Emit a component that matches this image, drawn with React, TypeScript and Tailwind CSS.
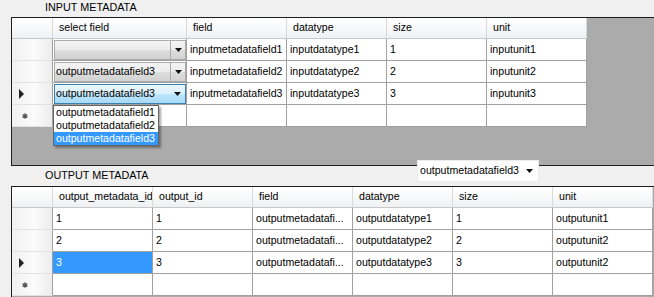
import React from "react";

type ComboVariant = "normal" | "hot";

const cellBase =
  "border-r border-b border-[#a0a0a0] bg-white flex items-center pl-[3px] whitespace-nowrap overflow-hidden";
const headBase =
  "border-r border-r-[#d9d9d9] border-b border-b-[#c8c8c8] bg-[linear-gradient(to_bottom,#ffffff,#f7f8f9_55%,#eef0f3)] flex items-center pl-[6px] whitespace-nowrap overflow-hidden";
const rowHeadBase =
  "border-r border-r-[#a0a0a0] border-b border-b-[#e2e2e2] bg-[linear-gradient(to_right,#f1f1f1,#fbfbfb_55%,#ededed)] flex items-center";

const Arrow = () => (
  <svg width="7" height="4" viewBox="0 0 7 4">
    <polygon points="0,0 7,0 3.5,4" fill="#111" />
  </svg>
);

const CurrentRow = () => (
  <div className="pl-[7px] flex items-center">
    <svg width="6" height="10" viewBox="0 0 6 10">
      <polygon points="0,0 5,5 0,10" fill="#222" />
    </svg>
  </div>
);

const NewRow = () => (
  <div className="pl-[10px] flex items-center">
    <svg width="6" height="6" viewBox="0 0 6 6">
      <path d="M3 0.3V5.7M0.6 1.6L5.4 4.4M0.6 4.4L5.4 1.6" stroke="#555" strokeWidth="1.3" />
    </svg>
  </div>
);

function ComboCell({ text, variant }: { text?: string; variant: ComboVariant }) {
  const box =
    variant === "hot"
      ? "border-[#3c7fb1] bg-[linear-gradient(to_bottom,#eaf6fd_0%,#d9f0fc_50%,#bee6fd_50%,#a7d9f5_100%)]"
      : "border-[#acacac] bg-[linear-gradient(to_bottom,#f4f4f4_0%,#ececec_50%,#dedede_50%,#d2d2d2_100%)]";
  return (
    <div className="border-r border-b border-[#a0a0a0] bg-white pt-[1px] pl-[1px]">
      <div className={`h-[20px] flex border ${box}`}>
        <div className="flex-1 flex items-center pl-[1px] whitespace-nowrap overflow-hidden">{text}</div>
        <div
          className={`w-[15px] flex items-center justify-center ${
            variant === "normal" ? "border-l border-l-[#acacac]" : ""
          }`}
        >
          <Arrow />
        </div>
      </div>
    </div>
  );
}

const inputRows = [
  { combo: "", field: "inputmetadatafield1", type: "inputdatatype1", size: "1", unit: "inputunit1" },
  { combo: "outputmetadatafield3", field: "inputmetadatafield2", type: "inputdatatype2", size: "2", unit: "inputunit2" },
  { combo: "outputmetadatafield3", field: "inputmetadatafield3", type: "inputdatatype3", size: "3", unit: "inputunit3" },
];

const outputRows = [
  ["1", "1", "outputmetadatafi...", "outputdatatype1", "1", "outputunit1"],
  ["2", "2", "outputmetadatafi...", "outputdatatype2", "2", "outputunit2"],
  ["3", "3", "outputmetadatafi...", "outputdatatype3", "3", "outputunit2"],
];

export default function App() {
  return (
    <div className="w-[654px] h-[297px] overflow-hidden bg-[#f0f0f0] font-['Liberation_Sans',Arial,sans-serif] text-[10.6px] text-black">
      <div className="h-[17px] pl-[45px] pt-[1px] leading-[13px] text-[10.8px]">INPUT METADATA</div>

      {/* input grid */}
      <div className="relative ml-[11px] w-[660px] h-[149px] border border-[#1e1e1e] bg-[#ababab]">
        <div className="grid grid-cols-[41px_134px_100px_100px_100px_100px] grid-rows-[21px_22px_22px_22px_22px] w-[575px]">
          <div className={headBase} />
          <div className={headBase}>select field</div>
          <div className={headBase}>field</div>
          <div className={headBase}>datatype</div>
          <div className={headBase}>size</div>
          <div className={headBase}>unit</div>

          {inputRows.map((r, i) => (
            <React.Fragment key={i}>
              <div className={rowHeadBase}>{i === 2 && <CurrentRow />}</div>
              <ComboCell text={r.combo} variant={i === 2 ? "hot" : "normal"} />
              <div className={cellBase}>{r.field}</div>
              <div className={cellBase}>{r.type}</div>
              <div className={cellBase}>{r.size}</div>
              <div className={cellBase}>{r.unit}</div>
            </React.Fragment>
          ))}

          <div className={rowHeadBase}>
            <NewRow />
          </div>
          <div className={cellBase} />
          <div className={cellBase} />
          <div className={cellBase} />
          <div className={cellBase} />
          <div className={cellBase} />
        </div>

        {/* open drop-down list */}
        <div className="absolute left-[41px] top-[87px] w-[106px] border border-[#646464] bg-white shadow-[2px_2px_2px_rgba(0,0,0,0.35)] z-10">
          <div className="h-[13px] leading-[13px] pl-[2px] whitespace-nowrap">outputmetadatafield1</div>
          <div className="h-[13px] leading-[13px] pl-[2px] whitespace-nowrap">outputmetadatafield2</div>
          <div className="h-[13px] leading-[13px] pl-[2px] whitespace-nowrap bg-[#3399ff] text-white">
            outputmetadatafield3
          </div>
        </div>
      </div>

      <div className="relative h-[20px]">
        <div className="pl-[45px] pt-[3px] leading-[13px] text-[10.8px]">OUTPUT METADATA</div>
        <div className="absolute left-[417px] -top-[6px] w-[122px] h-[22px] bg-white border border-[#ececec] flex items-center justify-between pr-[5px] z-10">
          <span className="pl-[2px] whitespace-nowrap">outputmetadatafield3</span>
          <Arrow />
        </div>
      </div>

      {/* output grid */}
      <div className="ml-[11px] w-[660px] h-[130px] border border-[#1e1e1e] bg-[#ababab]">
        <div className="grid grid-cols-[41px_100px_100px_100px_100px_100px_100px] grid-rows-[21px_22px_22px_22px_22px] w-[641px]">
          <div className={headBase} />
          {["output_metadata_id", "output_id", "field", "datatype", "size", "unit"].map((h) => (
            <div key={h} className={headBase}>
              {h}
            </div>
          ))}

          {outputRows.map((r, i) => (
            <React.Fragment key={i}>
              <div className={rowHeadBase}>{i === 2 && <CurrentRow />}</div>
              {r.map((c, j) => (
                <div
                  key={j}
                  className={
                    i === 2 && j === 0
                      ? "border-r border-b border-[#a0a0a0] bg-[#3399ff] text-white flex items-center pl-[3px]"
                      : cellBase
                  }
                >
                  {c}
                </div>
              ))}
            </React.Fragment>
          ))}

          <div className={rowHeadBase}>
            <NewRow />
          </div>
          {[0, 1, 2, 3, 4, 5].map((k) => (
            <div key={k} className={cellBase} />
          ))}
        </div>
      </div>
    </div>
  );
}
